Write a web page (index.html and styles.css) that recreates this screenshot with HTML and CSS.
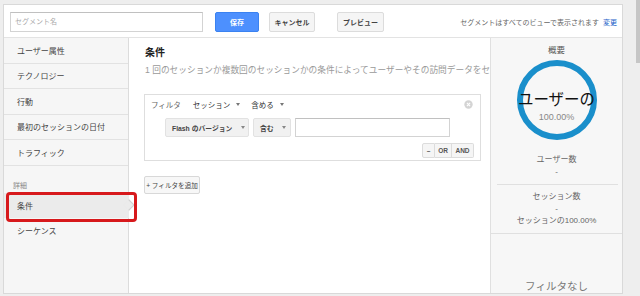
FILE: index.html
```html
<!DOCTYPE html>
<html lang="ja">
<head>
  <meta charset="UTF-8" />
  <meta name="viewport" content="width=device-width, initial-scale=1.0" />
  <title>セグメント</title>
  <link rel="stylesheet" href="styles.css">
</head>
<body>
  <div class="app">
    <div class="frame">
      <!-- Toolbar -->
      <div class="toolbar">
        <input class="seg-name" type="text" placeholder="セグメント名">
        <button class="btn btn-save">保存</button>
        <button class="btn btn-cancel">キャンセル</button>
        <button class="btn btn-preview">プレビュー</button>
        <div class="notice">セグメントはすべてのビューで表示されます <a class="notice-link">変更</a></div>
      </div>

      <div class="content">
        <!-- Left Nav -->
        <nav class="nav">
          <div class="nav-item">ユーザー属性</div>
          <div class="nav-item">テクノロジー</div>
          <div class="nav-item">行動</div>
          <div class="nav-item">最初のセッションの日付</div>
          <div class="nav-item">トラフィック</div>
          <div class="nav-label">詳細</div>
          <div class="nav-item sub active">条件</div>
          <div class="nav-item sub">シーケンス</div>
        </nav>

        <!-- Condition Editor -->
        <main class="main">
          <h2 class="title">条件</h2>
          <p class="desc">1 回のセッションか複数回のセッションかの条件によってユーザーやその訪問データをセ</p>

          <div class="filter-box">
            <div class="filter-head">
              <span class="filter-label">フィルタ</span>
              <span class="drop">セッション<i class="caret"></i></span>
              <span class="drop">含める<i class="caret"></i></span>
              <svg class="close" width="9" height="9" viewBox="0 0 9 9">
                <circle cx="4.5" cy="4.5" r="4.2" fill="#d4d4d4"/>
                <path d="M2.9 2.9l3.2 3.2M6.1 2.9l-3.2 3.2" stroke="#fff" stroke-width="1.1"/>
              </svg>
            </div>
            <div class="filter-row">
              <button class="sel sel-dim">Flash のバージョン<i class="caret"></i></button>
              <button class="sel sel-op">含む<i class="caret"></i></button>
              <input class="val" type="text">
            </div>
            <div class="filter-ops">
              <button class="op op-minus">&ndash;</button>
              <button class="op op-or">OR</button>
              <button class="op op-and">AND</button>
            </div>
          </div>

          <button class="add-filter">+ フィルタを追加</button>
        </main>

        <!-- Summary -->
        <aside class="side">
          <div class="side-title">概要</div>
          <div class="ring">
            <div class="ring-main">ユーザーの</div>
            <div class="ring-pct">100.00%</div>
          </div>
          <div class="stat stat-users">
            <div>ユーザー数</div>
            <div>-</div>
          </div>
          <div class="stat-sep"></div>
          <div class="stat">
            <div>セッション数</div>
            <div>-</div>
            <div>セッションの100.00%</div>
          </div>
          <div class="side-sep"></div>
          <div class="no-filter">フィルタなし</div>
        </aside>

        <!-- annotation box -->
        <div class="highlight"></div>
      </div>
    </div>
    <div class="gutter"><div class="thumb"></div></div>
  </div>
</body>
</html>
```

FILE: styles.css
```css
body {
  margin: 0;
  background: #eeeeee;
  font-family: "Liberation Sans", "Noto Sans CJK JP", sans-serif;
  color: #444;
}
.app {
  display: flex;
  height: 296px;
  overflow: hidden;
}
.frame {
  margin: 4px 0 0 3px;
  width: 620px;
  height: 290px;
  box-sizing: border-box;
  border: 1px solid #d9d9d9;
  background: #fff;
  display: flex;
  flex-direction: column;
}
/* Scrollbar gutter */
.gutter {
  flex: 1;
  display: flex;
  justify-content: flex-end;
}
.thumb {
  width: 4px;
  height: 63px;
  background: #c6c6c6;
}
/* Toolbar */
.toolbar {
  height: 33px;
  flex-shrink: 0;
  box-sizing: border-box;
  border-bottom: 1px solid #e3e3e3;
  display: flex;
  align-items: center;
  padding: 1px 5px 0 6px;
}
.seg-name {
  width: 193px;
  height: 20px;
  box-sizing: border-box;
  margin: 0;
  border: 1px solid #d3d3d3;
  border-top-color: #c0c0c0;
  padding: 0 4px;
  font-family: inherit;
  font-size: 7px;
}
.seg-name::placeholder {
  color: #aaa;
}
.btn {
  height: 20px;
  box-sizing: border-box;
  padding: 0;
  border: 1px solid #dcdcdc;
  border-radius: 2px;
  background: #f5f5f5;
  color: #444;
  font-family: inherit;
  font-size: 7px;
  font-weight: bold;
}
.btn-save {
  width: 44px;
  margin-left: 12px;
  background: #4d90fe;
  border-color: #3b82f0;
  color: #fff;
}
.btn-cancel {
  width: 46px;
  margin-left: 10px;
}
.btn-preview {
  width: 47px;
  margin-left: 22px;
}
.notice {
  margin-left: auto;
  font-size: 7px;
  color: #666;
}
.notice-link {
  color: #1a5fc8;
  margin-left: 2px;
}
/* Content area */
.content {
  flex: 1;
  min-height: 0;
  display: flex;
  position: relative;
}
/* Left Nav */
.nav {
  width: 125px;
  flex-shrink: 0;
  box-sizing: border-box;
  border-right: 1px solid #dcdcdc;
  background: #f6f6f6;
}
.nav-item {
  height: 25.5px;
  box-sizing: border-box;
  border-bottom: 1px solid #e2e2e2;
  padding-left: 13px;
  display: flex;
  align-items: center;
  font-size: 8px;
  color: #444;
  position: relative;
}
.nav-item.sub {
  border-bottom: none;
}
.nav-item.active {
  background: #ebebeb;
  margin-right: -1px;
}
.nav-item.active::after {
  content: "";
  position: absolute;
  right: -4px;
  top: 50%;
  width: 7px;
  height: 7px;
  margin-top: -4px;
  background: #ebebeb;
  border-top: 1px solid #d0d0d0;
  border-right: 1px solid #d0d0d0;
  transform: rotate(45deg);
}
.nav-label {
  margin-top: 14px;
  height: 13px;
  padding-left: 9px;
  font-size: 7px;
  line-height: 12px;
  color: #888;
}
/* Main */
.main {
  width: 361px;
  flex-shrink: 0;
  box-sizing: border-box;
  padding: 8px 9px 0 15px;
  overflow: hidden;
}
.title {
  margin: 0;
  font-size: 10px;
  line-height: 14px;
  font-weight: bold;
  color: #222;
  padding-left: 1px;
}
.desc {
  margin: 4px -12px 0 1px;
  white-space: nowrap;
  font-size: 8.7px;
  line-height: 12px;
  color: #9a9a9a;
}
.filter-box {
  margin-top: 18px;
  width: 337px;
  height: 67px;
  box-sizing: border-box;
  border: 1px solid #dedede;
  padding: 3px 6px 0 6px;
}
.filter-head {
  height: 12px;
  display: flex;
  align-items: center;
  font-size: 7.5px;
}
.filter-label {
  color: #666;
  margin-right: 12px;
}
.drop {
  color: #333;
  margin-right: 11px;
  display: flex;
  align-items: center;
}
.caret {
  display: inline-block;
  width: 0;
  height: 0;
  margin-left: 6px;
  border-left: 2px solid transparent;
  border-right: 2px solid transparent;
  border-top: 3px solid #777;
}
.close {
  margin-left: auto;
  margin-right: 1px;
}
.filter-row {
  margin: 8px 0 0 14px;
  display: flex;
  gap: 4px;
}
.sel {
  height: 19px;
  box-sizing: border-box;
  padding: 0 0 0 6px;
  border: 1px solid #e2e2e2;
  border-radius: 2px;
  background: #f1f1f1;
  font-family: inherit;
  font-size: 6.8px;
  font-weight: bold;
  color: #444;
  display: flex;
  align-items: center;
}
.sel .caret {
  border-top-color: #888;
}
.sel-dim {
  width: 84px;
}
.sel-dim .caret {
  margin-left: 9px;
}
.sel-op {
  width: 38px;
}
.sel-op .caret {
  margin-left: 8px;
}
.val {
  width: 155px;
  height: 19px;
  box-sizing: border-box;
  margin: 0;
  border: 1px solid #d3d3d3;
  border-top-color: #c0c0c0;
}
.filter-ops {
  margin-top: 6px;
  display: flex;
  justify-content: flex-end;
}
.op {
  height: 15px;
  box-sizing: border-box;
  padding: 0;
  border: 1px solid #dcdcdc;
  background: #f5f5f5;
  font-family: inherit;
  font-size: 6.5px;
  font-weight: bold;
  color: #555;
}
.op + .op {
  border-left: none;
}
.op-minus {
  width: 13px;
  border-radius: 2px 0 0 2px;
}
.op-or {
  width: 17px;
}
.op-and {
  width: 22px;
  border-radius: 0 2px 2px 0;
}
.add-filter {
  display: block;
  margin-top: 15px;
  width: 56px;
  height: 18px;
  box-sizing: border-box;
  padding: 0;
  border: 1px solid #d8d8d8;
  border-radius: 2px;
  background: #f7f7f7;
  font-family: inherit;
  font-size: 6.6px;
  color: #444;
}
/* Summary */
.side {
  flex: 1;
  box-sizing: border-box;
  border-left: 1px solid #e0e0e0;
  background: #f7f7f7;
  text-align: center;
  color: #666;
  overflow: hidden;
  padding-top: 6px;
}
.side-title {
  font-size: 8.5px;
  line-height: 12px;
  color: #555;
}
.ring {
  width: 80px;
  height: 80px;
  box-sizing: border-box;
  margin: 4px auto 0;
  border: 6px solid #1a8fcb;
  border-radius: 50%;
  padding-top: 25px;
  display: flex;
  flex-direction: column;
  align-items: center;
}
.ring-main {
  white-space: nowrap;
  font-size: 15.5px;
  line-height: 18px;
  color: #111;
}
.ring-pct {
  margin-top: 2px;
  font-size: 9px;
  line-height: 12px;
  color: #888;
}
.stat {
  font-size: 8px;
  line-height: 12px;
}
.stat-users {
  margin-top: 14px;
}
.stat-sep {
  margin: 6px 4px 6px 6px;
  border-top: 1px solid #e0e0e0;
}
.side-sep {
  margin-top: 6px;
  border-top: 1px solid #e0e0e0;
}
.no-filter {
  margin-top: 45px;
  font-size: 10.5px;
  line-height: 14px;
  color: #777;
}
/* Annotation */
.highlight {
  position: absolute;
  left: 2px;
  top: 154px;
  width: 131px;
  height: 30px;
  box-sizing: border-box;
  border: 3px solid #d7191c;
  border-radius: 4px;
  pointer-events: none;
}
```
